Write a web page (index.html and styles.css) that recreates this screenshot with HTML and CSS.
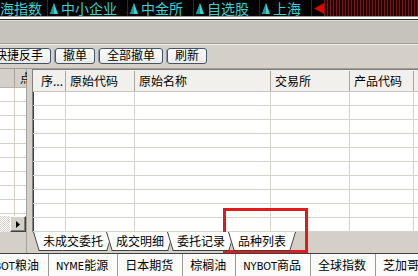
FILE: index.html
```html
<!DOCTYPE html>
<html lang="zh-CN">
<head>
  <meta charset="UTF-8">
  <title>交易终端</title>
  <link rel="stylesheet" href="styles.css">
</head>
<body>
  <div class="screen">
    <div class="ticker">
      <div class="tk first"><span class="tk-name">海指数</span></div>
      <div class="tk"><svg class="tri" viewBox="0 0 8 11"><polygon points="4,0 8,11 0,11" fill="#3cd2d2"/><polygon points="4,0 4,11 0,11" fill="#1a9a9a"/></svg><span class="tk-name">中小企业</span></div>
      <div class="tk"><svg class="tri" viewBox="0 0 8 11"><polygon points="4,0 8,11 0,11" fill="#3cd2d2"/><polygon points="4,0 4,11 0,11" fill="#1a9a9a"/></svg><span class="tk-name">中金所</span></div>
      <div class="tk"><svg class="tri" viewBox="0 0 8 11"><polygon points="4,0 8,11 0,11" fill="#3cd2d2"/><polygon points="4,0 4,11 0,11" fill="#1a9a9a"/></svg><span class="tk-name">自选股</span></div>
      <div class="tk"><svg class="tri" viewBox="0 0 8 11"><polygon points="4,0 8,11 0,11" fill="#3cd2d2"/><polygon points="4,0 4,11 0,11" fill="#1a9a9a"/></svg><span class="tk-name">上海</span></div>
      <div class="tk scroll"><svg class="back" viewBox="0 0 10 11"><polygon points="0,5.5 10,0 10,11" fill="#e00000"/></svg></div>
      <div class="stripes"></div>
    </div>
    <div class="rule"></div>
    <div class="band"></div>

    <div class="toolbar">
      <button class="btn first">快捷反手</button>
      <button class="btn">撤单</button>
      <button class="btn">全部撤单</button>
      <button class="btn">刷新</button>
    </div>

    <div class="main">
      <div class="left">
        <div class="left-head"><span class="lc"></span><span class="lc name">点</span></div>
        <div class="left-body"></div>
        <div class="hscroll">
          <div class="track"></div>
          <div class="arrow"><svg viewBox="0 0 4 7" width="4" height="7"><polygon points="0,0 4,3.5 0,7" fill="#000"/></svg></div>
        </div>
        <div class="left-foot"></div>
      </div>
      <div class="splitter"></div>
      <div class="right">
        <div class="grid">
          <div class="head">
            <div class="hc c1">序...</div>
            <div class="hc c2">原始代码</div>
            <div class="hc c3">原始名称</div>
            <div class="hc c4">交易所</div>
            <div class="hc c5">产品代码</div>
            <div class="hc rest"></div>
          </div>
          <div class="body">
            <div class="col c1"></div>
            <div class="col c2"></div>
            <div class="col c3"></div>
            <div class="col c4"></div>
            <div class="col c5"></div>
          </div>
        </div>
        <div class="tabs">
          <div class="tab">未成交委托</div>
          <div class="tab">成交明细</div>
          <div class="tab">委托记录</div>
          <div class="tab active">品种列表</div>
        </div>
      </div>
    </div>

    <div class="status">
      <div class="st first"><span class="lat">NYBOT</span>粮油</div>
      <div class="st"><span class="lat">NYME</span>能源</div>
      <div class="st">日本期货</div>
      <div class="st">棕榈油</div>
      <div class="st"><span class="lat">NYBOT</span>商品</div>
      <div class="st">全球指数</div>
      <div class="st">芝加哥商品</div>
    </div>

    <div class="mark"></div>
  </div>
</body>
</html>
```

FILE: styles.css
```css
* {
  box-sizing: border-box;
}

body {
  margin: 0;
  font-family: "Liberation Sans", "Noto Sans CJK SC", sans-serif;
  font-size: 12px;
  color: #000;
  background: #d4d0c8;
}

.screen {
  position: relative;
  width: 418px;
  height: 276px;
  overflow: hidden;
  display: flex;
  flex-direction: column;
}

/* ticker */
.ticker {
  flex: none;
  height: 16px;
  display: flex;
  background: #000;
}

.tk {
  flex: none;
  display: flex;
  align-items: center;
  gap: 3px;
  padding: 0 10px 0 2px;
  border-right: 1px solid #7a0a0a;
  color: #3cd2d2;
  font-family: "Noto Sans CJK SC", sans-serif;
  font-size: 14px;
  white-space: nowrap;
}

.tk-name {
  display: block;
  height: 16px;
  line-height: 16px;
}

.tk.first {
  padding: 0 5px 0 0;
}

.tk.scroll {
  padding: 0 0 0 2px;
  border-right: none;
}

.tri {
  width: 8px;
  height: 11px;
}

.back {
  width: 10px;
  height: 11px;
}

.stripes {
  flex: 1;
  background: repeating-linear-gradient(to right, #7c1414 0 1px, #230000 1px 3px);
}

.rule {
  flex: none;
  height: 4px;
  background: #fff;
  border-top: 1px solid #9a9a9a;
  border-bottom: 1px solid #333;
}

.band {
  flex: none;
  height: 24px;
  background: #c6c3bb;
  border-top: 1px solid #dcd9d2;
  border-bottom: 1px solid #9d9a92;
}

/* toolbar */
.toolbar {
  flex: none;
  height: 25px;
  display: flex;
  align-items: flex-start;
  gap: 4px;
  padding-top: 3px;
  background: #d4d0c8;
  border-top: 1px solid #f4f3ef;
  border-bottom: 1px solid #a09c94;
}

.btn {
  height: 16px;
  padding: 0 7px;
  font: inherit;
  line-height: 14px;
  color: #000;
  background: linear-gradient(#ffffff, #ecebe6);
  border: 1px solid #41566d;
  border-radius: 3px;
  box-shadow: -2px 0 0 -1px #8a98a8;
}

.btn.first {
  margin-left: -13px;
}

/* main */
.main {
  flex: 1;
  display: flex;
  min-height: 0;
}

.left {
  width: 27px;
  flex: none;
  display: flex;
  flex-direction: column;
  border-right: 1px solid #a6a39b;
}

.left-head {
  height: 19px;
  flex: none;
  display: flex;
  background: #d4d0c8;
  border-bottom: 1px solid #b8b5ad;
}

.lc {
  width: 15px;
  flex: none;
  border-right: 1px solid #a6a39b;
}

.lc.name {
  width: auto;
  padding-left: 5px;
  line-height: 18px;
  border-right: none;
  font-family: "Noto Sans CJK SC", sans-serif;
}

.left-body {
  flex: 1;
  background:
    linear-gradient(to right, transparent 14px, #d4d0c8 14px 15px, transparent 15px),
    repeating-linear-gradient(to bottom, #fff 0 13px, #d4d0c8 13px 14px);
}

.hscroll {
  height: 16px;
  flex: none;
  display: flex;
}

.track {
  flex: 1;
  background: repeating-conic-gradient(#fff 0 25%, #d4d0c8 0 50%) 0 0 / 2px 2px;
}

.arrow {
  width: 16px;
  display: flex;
  align-items: center;
  justify-content: center;
  background: #d4d0c8;
  border: 1px solid;
  border-color: #fff #404040 #404040 #fff;
  box-shadow: inset -1px -1px 0 #808080;
}

.left-foot {
  height: 21px;
  flex: none;
  background: #d4d0c8;
}

.splitter {
  width: 5px;
  flex: none;
  background: #d4d0c8;
}

.right {
  flex: 1;
  display: flex;
  flex-direction: column;
}

.grid {
  height: 163px;
  flex: none;
  display: flex;
  flex-direction: column;
  background: #fff;
  border-top: 1px solid #808080;
  border-left: 1px solid #808080;
  box-shadow: inset 1px 1px 0 #404040;
}

.head {
  height: 22px;
  flex: none;
  display: flex;
  padding-top: 1px;
  background: #f1f0ec;
  border-bottom: 1px solid #c9c6bf;
}

.hc {
  flex: none;
  padding-left: 4px;
  line-height: 20px;
  border-right: 1px solid #aaa79f;
  font-family: "Noto Sans CJK SC", sans-serif;
  white-space: nowrap;
}

.hc.c1 {
  padding-left: 8px;
}

.body {
  flex: 1;
  display: flex;
  background: repeating-linear-gradient(to bottom, transparent 0 13px, #d6d3ce 13px 14px);
}

.col {
  flex: none;
  border-right: 1px solid #d6d3ce;
}

.c1 { width: 33px; }
.c2 { width: 69px; }
.c3 { width: 136px; }
.c4 { width: 79px; }
.c5 { width: 64px; }
.hc.rest { flex: 1; border-right: none; }

/* sheet tabs */
.tabs {
  flex: 1;
  display: flex;
  padding-left: 1px;
  background: #d4d0c8;
}

.tab {
  position: relative;
  height: 19px;
  padding: 0 10px;
  margin-right: -7px;
  line-height: 18px;
  font-family: "Noto Sans CJK SC", sans-serif;
  white-space: nowrap;
  z-index: 1;
}

.tab::before,
.tab::after {
  content: "";
  position: absolute;
  top: 0;
  bottom: 0;
  width: 55%;
  background: #fff;
  border-bottom: 1px solid #404040;
  z-index: -1;
}

.tab::before {
  left: 0;
  border-left: 1px solid #404040;
  transform: skewX(17deg);
  transform-origin: top left;
}

.tab::after {
  right: 0;
  border-right: 1px solid #404040;
  transform: skewX(-17deg);
  transform-origin: top right;
}

.tab.active {
  z-index: 2;
}

/* status bar */
.status {
  flex: none;
  height: 23px;
  display: flex;
  background: #fbfbf9;
  border-top: 1px solid #404040;
  overflow: hidden;
}

.st {
  flex: none;
  padding: 0 9px 0 7px;
  line-height: 21px;
  border-right: 1px solid #9c9a94;
  white-space: nowrap;
  font-family: "Noto Sans CJK SC", sans-serif;
}

.lat {
  font-family: "DejaVu Sans Condensed", "DejaVu Sans", sans-serif;
  font-size: 11px;
}

.st.first {
  margin-left: -26px;
}

.mark {
  position: absolute;
  left: 223px;
  top: 208px;
  width: 85px;
  height: 45px;
  border: 3px solid #e21a1a;
}
```
